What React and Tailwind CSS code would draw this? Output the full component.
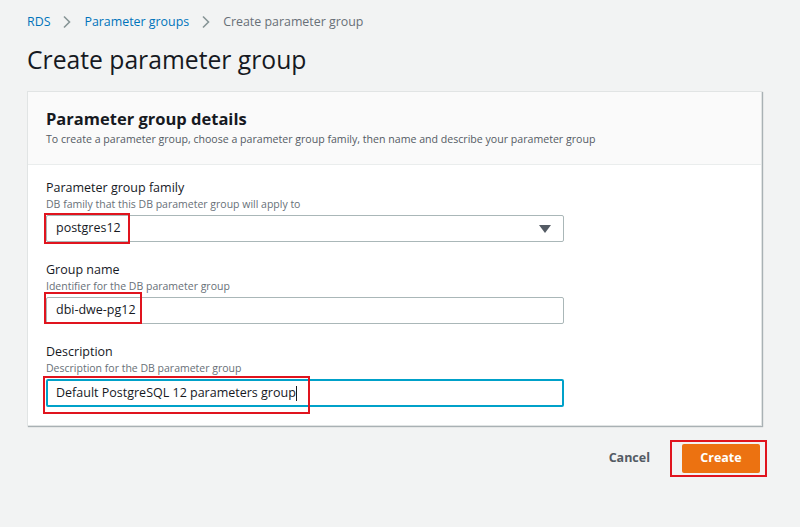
import React from 'react'

const font = { fontFamily: '"Open Sans", "Noto Sans", sans-serif' }

function Chevron() {
  return (
    <svg width="10" height="14" viewBox="0 0 10 14" className="mx-[12px]">
      <path d="M2 1.5 L7.5 7 L2 12.5" fill="none" stroke="#879596" strokeWidth="1.6" />
    </svg>
  )
}

function Field({ label, hint, children, className = '' }) {
  return (
    <div className={className}>
      <div className="text-[12.5px] leading-[16px] text-[#16191f]">{label}</div>
      <div className="text-[10.5px] leading-[14px] text-[#687078] mt-[1px]">{hint}</div>
      <div className="mt-[4px]">{children}</div>
    </div>
  )
}

function RedBox({ className }) {
  return <div className={`absolute border-2 border-[#e0141e] pointer-events-none ${className}`} />
}

export default function App() {
  return (
    <div className="min-h-[527px] bg-[#f2f3f3] pl-[27px] pt-[13px]" style={font}>
      <div className="flex items-center h-[18px] text-[12.4px]">
        <span className="text-[#0073bb]">RDS</span>
        <Chevron />
        <span className="text-[#0073bb]">Parameter groups</span>
        <Chevron />
        <span className="text-[#687078]">Create parameter group</span>
      </div>
      <h1 className="text-[24.7px] leading-[34px] text-[#16191f] mt-[12px]">Create parameter group</h1>

      <div className="w-[735px] mt-[14px] bg-white border border-[#e1e4e4] shadow-[1px_1px_1px_0_rgba(0,28,36,0.3)]">
        <div className="bg-[#fafafa] border-b border-[#eaeded] px-[18px] pt-[16px] pb-[17px]">
          <div className="text-[16.5px] leading-[22px] font-bold text-[#16191f]">Parameter group details</div>
          <div className="text-[10.6px] leading-[15px] text-[#545b64] mt-[2px]">
            To create a parameter group, choose a parameter group family, then name and describe your parameter group
          </div>
        </div>

        <div className="px-[18px] pt-[15px] pb-[18px]">
          <Field label="Parameter group family" hint="DB family that this DB parameter group will apply to">
            <div className="relative w-[518px] h-[27px] border border-[#aab7b8] rounded-[2px] flex items-center justify-between pl-[9px] pr-[12px]">
              <span className="text-[12.5px] text-[#16191f]">postgres12</span>
              <svg width="12" height="8" viewBox="0 0 12 8">
                <path d="M0 0 H12 L6 8 Z" fill="#545b64" />
              </svg>
              <RedBox className="left-[-3px] top-[-3px] w-[86px] h-[31px]" />
            </div>
          </Field>

          <Field label="Group name" hint="Identifier for the DB parameter group" className="mt-[20px]">
            <div className="relative w-[518px] h-[27px] border border-[#aab7b8] rounded-[2px] flex items-center pl-[9px]">
              <span className="text-[12.5px] text-[#16191f]">dbi-dwe-pg12</span>
              <RedBox className="left-[-3px] top-[-6px] w-[98px] h-[32px]" />
            </div>
          </Field>

          <Field label="Description" hint="Description for the DB parameter group" className="mt-[20px]">
            <div className="relative w-[518px] h-[28px] border-2 border-[#00a1c9] rounded-[2px] flex items-center pl-[8px]">
              <span className="text-[12.5px] text-[#16191f]">Default PostgreSQL 12 parameters group</span>
              <span className="w-px h-[15px] bg-[#16191f]" />
              <RedBox className="left-[-5px] top-[-5px] w-[267px] h-[38px]" />
            </div>
          </Field>
        </div>
      </div>

      <div className="w-[733px] flex justify-end items-center mt-[18px]">
        <span className="text-[12.5px] font-bold text-[#545b64] mr-[32px]">Cancel</span>
        <div className="relative">
          <div className="w-[78px] h-[29px] bg-[#ec7211] rounded-[2px] flex items-center justify-center text-[12.5px] font-bold text-white">
            Create
          </div>
          <RedBox className="left-[-12px] top-[-4px] w-[97px] h-[37px]" />
        </div>
      </div>
    </div>
  )
}
